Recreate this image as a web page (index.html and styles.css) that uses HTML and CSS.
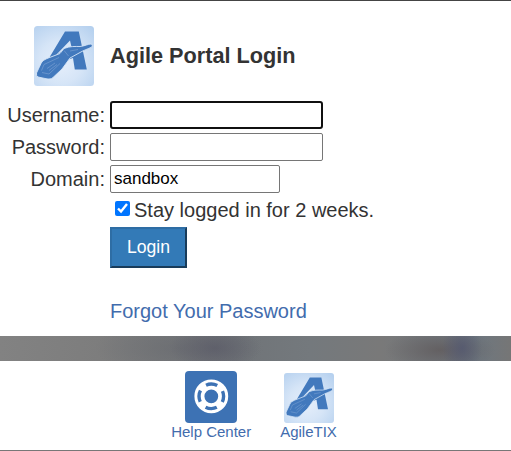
FILE: index.html
```html
<!DOCTYPE html>
<html lang="en">

<head>
    <meta charset="UTF-8">
    <meta name="viewport" content="width=device-width, initial-scale=1.0">
    <title>Agile Portal Login</title>
    <link rel="stylesheet" href="styles.css">
</head>

<body>
    <svg class="defs" width="0" height="0">
        <defs>
            <radialGradient id="logoBg" cx="45%" cy="60%" r="80%">
                <stop offset="0" stop-color="#e6effb" />
                <stop offset="0.45" stop-color="#d6e5f7" />
                <stop offset="1" stop-color="#b3cfee" />
            </radialGradient>
            <symbol id="logo" viewBox="0 0 60 60">
                <rect width="60" height="60" rx="3.5" fill="url(#logoBg)" />
                <path d="M31 5.500H44.800L52.800 43.500H40.800L39 32L27 36L14.500 33Z" fill="#4279bd" />
                <path d="M36 14.500L37.500 21L30 23L25.500 27L22 29Z" fill="#d6e5f7" />
                <path d="M2.500 47L7 37.500C8 35 10 34 13 32.500L26 27.500L30 22.500C36 20 41 20.500 46 20.500C51 20 54 18 57 18C58.500 18.300 58.700 20 57.500 21.200C54 23 50 24 46 26.500L36 32L28 43L19 51.500C17.500 53 15 53.300 12 52.700L4 51Q2 50 2.500 47Z" fill="#4279bd" stroke="#d6e5f7" stroke-width="0.900" />
                <path d="M7.500 44.500L10 38.500L25 31.500M8 46.500L15 48L26 37.500" fill="none" stroke="#7fa5d5" stroke-width="0.600" />
                <path d="M13 42.500L21 37M15 44.500L23 38.500M30 24.500L34.500 30M36 25L44 23.500" fill="none" stroke="#7fa5d5" stroke-width="0.600" />
            </symbol>
        </defs>
    </svg>
    <div class="login">
        <form class="form">
            <svg class="logo">
                <use href="#logo" />
            </svg>
            <h1>Agile Portal Login</h1>
            <label for="username">Username:</label>
            <input class="field active" type="text" id="username">
            <label for="password">Password:</label>
            <input class="field" type="password" id="password">
            <label for="domain">Domain:</label>
            <input class="field domain" type="text" id="domain" value="sandbox">
            <div class="remember">
                <input type="checkbox" id="remember" checked>
                <label for="remember">Stay logged in for 2 weeks.</label>
            </div>
            <button class="submit" type="button">Login</button>
            <a class="forgot" href="#">Forgot Your Password</a>
        </form>
    </div>
    <div class="banner"></div>
    <div class="links">
        <a class="link" href="#">
            <svg class="help" viewBox="0 0 52 52">
                <rect width="52" height="52" rx="4" fill="#3d72b4" />
                <circle cx="26.300" cy="25.300" r="11.900" fill="none" stroke="#fff" stroke-width="10" />
                <circle cx="26.300" cy="25.300" r="12.300" fill="none" stroke="#3d72b4" stroke-width="3.400" stroke-dasharray="11.600 7.721" stroke-dashoffset="5.800" />
            </svg>
            <span>Help Center</span>
        </a>
        <a class="link" href="#">
            <svg class="tix">
                <use href="#logo" />
            </svg>
            <span>AgileTIX</span>
        </a>
    </div>
</body>

</html>
```
FILE: styles.css
```css
* {
    margin: 0;
    padding: 0;
    box-sizing: border-box;
}

body {
    font-family: "Liberation Sans", Arial, sans-serif;
    font-size: 20px;
    color: #333;
    background-color: #fff;
    height: 451px;
    overflow: hidden;
}

svg {
    display: block;
}

.defs {
    position: absolute;
}

a {
    color: #426cad;
    text-decoration: none;
}

.login {
    height: 336px;
    padding: 25px 7px 0;
    border-top: 1px solid #444;
}

.form {
    display: grid;
    grid-template-columns: 98px 1fr;
    grid-template-rows: 71px 28px 28px 28px 26px 41px auto;
    column-gap: 5px;
    row-gap: 4px;
    align-items: center;
    justify-items: start;
}

.form > label {
    justify-self: end;
}

.logo {
    width: 60px;
    height: 60px;
    justify-self: end;
    margin: 0 11px 11px 0;
}

h1 {
    margin-bottom: 11px;
    font-size: 21.7px;
    line-height: 26px;
}

.field {
    width: 213px;
    height: 28px;
    padding: 0 4px 1px 3px;
    border: 1px solid #767676;
    border-radius: 2px;
    outline: none;
    font-family: inherit;
    font-size: 17px;
    color: #000;
    background-color: #fff;
}

.active {
    border: 2px solid #101010;
    border-radius: 3px;
}

.domain {
    width: 170px;
}

.remember,
.submit,
.forgot {
    grid-column: 2;
}

.remember {
    display: flex;
    align-items: center;
    padding-left: 5px;
}

.remember input {
    width: 15px;
    height: 15px;
    margin: 0 4px 3px 0;
}

.submit {
    width: 77px;
    height: 41px;
    border: 2px solid;
    border-color: #2e6da4 #193c5a #193c5a #2e6da4;
    font-family: inherit;
    font-size: 17.6px;
    color: #fff;
    background-color: #337ab7;
}

.forgot {
    margin-top: 28px;
}

.banner {
    height: 25px;
    background:
        radial-gradient(ellipse 45px 24px at 215px 12px, rgba(85, 85, 100, 0.6), transparent),
        radial-gradient(ellipse 85px 28px at 180px 12px, rgba(100, 102, 108, 0.5), transparent),
        radial-gradient(ellipse 20px 26px at 462px 12px, rgba(80, 85, 112, 0.7), transparent),
        radial-gradient(ellipse 55px 22px at 440px 14px, rgba(96, 90, 91, 0.8), transparent),
        linear-gradient(to right, #828282, #7d7d7d 100px, #707478 235px, #74797d 310px, #797979 380px, #6d7780 475px, #767676);
}

.links {
    display: flex;
    justify-content: center;
    gap: 29px;
    height: 90px;
    padding: 10px 3px 0 0;
    border-bottom: 1px solid #777;
}

.link {
    display: flex;
    flex-direction: column;
    align-items: center;
    font-size: 15px;
    line-height: 17px;
}

.help {
    width: 52px;
    height: 52px;
}

.tix {
    width: 50px;
    height: 50px;
    margin-top: 2px;
}
```
